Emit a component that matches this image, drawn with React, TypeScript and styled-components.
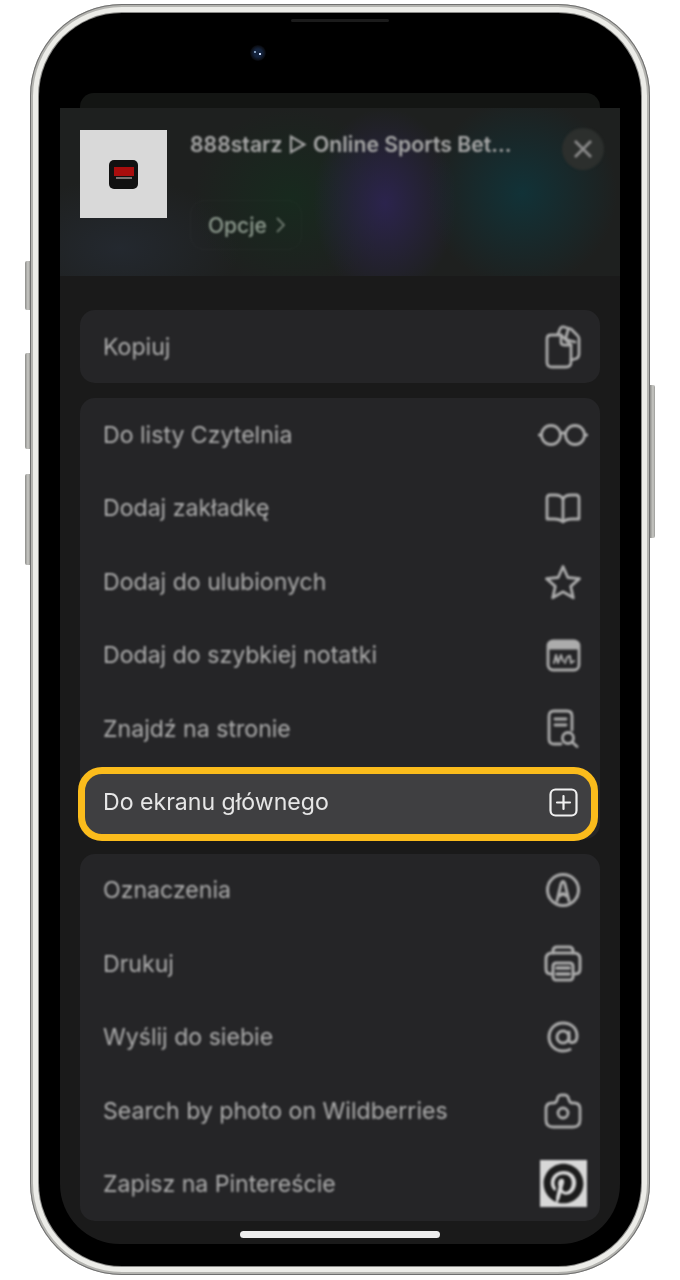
import styled, { createGlobalStyle } from 'styled-components';
import { FaPinterest } from 'react-icons/fa';

const GlobalStyle = createGlobalStyle`
  html, body {
    margin: 0;
    padding: 0;
    background: #fff;
  }
  * {
    box-sizing: border-box;
  }
`;

const Page = styled.div`
  position: relative;
  width: 680px;
  height: 1280px;
  padding: 4px 30px;
  overflow: hidden;
  background: #fff;
  font-family: Inter, "Liberation Sans", sans-serif;
`;

const SideButton = styled.div<{ $right?: boolean; $top: number; $height: number }>`
  position: absolute;
  top: ${(p) => p.$top}px;
  left: ${(p) => (p.$right ? 650 : 25)}px;
  width: 5px;
  height: ${(p) => p.$height}px;
  border-radius: ${(p) => (p.$right ? '0 2px 2px 0' : '2px 0 0 2px')};
  background: linear-gradient(90deg, #8d8d8a, #c9c9c5 60%, #9a9a97);
`;

const Bezel = styled.div`
  height: 1271px;
  padding: 9px;
  border-radius: 92px;
  background: #ecece8;
  box-shadow: inset 0 0 0 1px #6f6f6f, inset 0 0 0 3px #b4b4b0;
`;

const Phone = styled.div`
  display: flex;
  flex-direction: column;
  height: 100%;
  padding: 0 21px;
  border-radius: 83px;
  background: #000;
  box-shadow: 0 0 0 1px #8a8a88;
`;

const TopBar = styled.div`
  display: flex;
  flex-direction: column;
  align-items: center;
  height: 80px;
  padding-top: 6px;
`;

const Speaker = styled.div`
  width: 98px;
  height: 3px;
  border-radius: 2px;
  background: #1b1b1b;
`;

const Lens = styled.div`
  width: 16px;
  height: 16px;
  margin: 23px 0 0 -164px;
  border-radius: 50%;
  background:
    radial-gradient(circle 1.5px at 10px 9px, #cfe0ff 0 100%, transparent),
    radial-gradient(circle 1.5px at 5px 7px, #7f98b8 0 100%, transparent),
    radial-gradient(circle at 50% 50%, #14233d 0 4px, #0c0f16 7px, #05060a 8px);
`;

const BackCard = styled.div`
  height: 15px;
  margin: 0 20px;
  border-radius: 14px 14px 0 0;
  background: #131513;
`;

const Sheet = styled.div`
  display: flex;
  flex-direction: column;
  height: 1136px;
  overflow: hidden;
  border-radius: 0 0 60px 60px;
  background: #1a1a1a;
`;

const Header = styled.div`
  display: flex;
  flex: 0 0 168px;
  align-items: flex-start;
  padding: 22px 16px 0 20px;
  background:
    radial-gradient(ellipse 95px 95px at 462px 85px, rgba(16, 52, 58, 0.9) 0%, rgba(16, 52, 58, 0) 100%),
    radial-gradient(ellipse 72px 95px at 325px 95px, rgba(45, 36, 82, 0.9) 0%, rgba(45, 36, 82, 0) 100%),
    radial-gradient(ellipse 100px 90px at 232px 90px, rgba(22, 44, 30, 0.8) 0%, rgba(22, 44, 30, 0) 100%),
    radial-gradient(ellipse 120px 70px at 60px 140px, rgba(38, 44, 54, 0.7) 0%, rgba(38, 44, 54, 0) 100%),
    #1e201f;
`;

const AppTile = styled.div`
  display: flex;
  flex: 0 0 87px;
  align-items: center;
  justify-content: center;
  height: 88px;
  background: #d9d9d9;
  filter: blur(0.7px);
`;

const AppLogo = styled.div`
  display: flex;
  flex-direction: column;
  align-items: center;
  gap: 1px;
  width: 29px;
  height: 29px;
  padding-top: 7px;
  border-radius: 5px;
  background: #111;
  filter: blur(0.5px);

  &::before {
    content: '';
    width: 20px;
    height: 9px;
    background: #a80d0d;
  }

  &::after {
    content: '';
    width: 16px;
    height: 2px;
    background: #77706f;
  }
`;

const HeaderInfo = styled.div`
  display: flex;
  flex: 1;
  flex-direction: column;
  align-items: flex-start;
  min-width: 0;
  padding-left: 23px;
`;

const PageTitle = styled.div`
  color: #a8a8a8;
  font-size: 21.2px;
  font-weight: 600;
  line-height: 28px;
  white-space: nowrap;
  filter: blur(1px);
`;

const OptionsButton = styled.div`
  display: flex;
  align-items: center;
  gap: 9px;
  width: 112px;
  height: 50px;
  margin-top: 42px;
  padding-left: 17px;
  border: 1px solid rgba(255, 255, 255, 0.04);
  border-radius: 14px;
  color: #8f9c90;
  font-size: 21px;
  font-weight: 500;
  filter: blur(1px);
`;

const CloseButton = styled.div`
  display: flex;
  flex: 0 0 42px;
  align-items: center;
  justify-content: center;
  height: 42px;
  margin-top: -2px;
  border-radius: 50%;
  background: #2c2f2d;
  color: #8a8a8a;
  filter: blur(0.8px);
`;

const Body = styled.div`
  display: flex;
  flex-direction: column;
  gap: 15px;
  padding: 34px 20px 0;
`;

const Group = styled.div`
  border-radius: 15px;
  background: #252527;
`;

const Row = styled.div<{ $active?: boolean }>`
  position: relative;
  display: flex;
  align-items: center;
  justify-content: space-between;
  height: 73.4px;
  padding: 0 12px 0 23px;
  color: ${(p) => (p.$active ? '#e6e6e6' : '#aeaeae')};
  font-size: 23.1px;
  font-weight: 400;

  &::before {
    content: ${(p) => (p.$active ? "''" : 'none')};
    position: absolute;
    top: 2px;
    right: 2px;
    bottom: -2px;
    left: -2px;
    border: 7px solid #fbbc1c;
    border-radius: 24px;
    background: #3f3f41;
  }
`;

const Label = styled.span<{ $active?: boolean }>`
  position: relative;
  white-space: nowrap;
  filter: blur(${(p) => (p.$active ? 0.5 : 1)}px);
`;

const IconBox = styled.div<{ $active?: boolean }>`
  position: relative;
  display: flex;
  flex: 0 0 50px;
  align-items: center;
  justify-content: center;
  height: 50px;
  color: ${(p) => (p.$active ? '#f0f0f0' : '#acacac')};
  filter: blur(${(p) => (p.$active ? 0.4 : 0.9)}px);
`;

const PinterestTile = styled.div`
  display: flex;
  align-items: center;
  justify-content: center;
  width: 47px;
  height: 47px;
  background: #d8d8d8;
  color: #1c1c1c;
`;

const HomeIndicator = styled.div`
  flex: 0 0 7px;
  width: 200px;
  margin: 10px auto 0;
  border-radius: 4px;
  background: #ececec;
  filter: blur(0.4px);
`;

type GlyphProps = { w: number; h: number; sw?: number; children: React.ReactNode };

const Glyph = ({ w, h, sw = 2.8, children }: GlyphProps) => (
  <svg
    width={w}
    height={h}
    viewBox={`0 0 ${w} ${h}`}
    fill="none"
    stroke="currentColor"
    strokeWidth={sw}
    strokeLinecap="round"
    strokeLinejoin="round"
  >
    {children}
  </svg>
);

const icons = {
  copy: (
    <Glyph w={36} h={44}>
      <path d="M13 9 L15 4 Q16 1.500 19 2 L26 4 L32 10 Q34.500 12 34 15 V29 Q34 33 30 34 L26 35" />
      <path d="M23 5 L21 12 Q20.500 14 23 15 L30 17" />
      <path d="M6 10 H16 L26 20 V37 Q26 42 21 42 H7 Q2 42 2 37 V14 Q2 10 6 10 Z" />
      <path d="M16 10 V17 Q16 20 19 20 H26" />
    </Glyph>
  ),
  glasses: (
    <Glyph w={50} h={24}>
      <circle cx="13" cy="12" r="9.500" />
      <circle cx="37" cy="12" r="9.500" />
      <path d="M22.500 11 Q25 8.500 27.500 11 M3 12 H1 M47 12 H49" />
    </Glyph>
  ),
  book: (
    <Glyph w={38} h={31}>
      <path d="M19 6 Q17 2 11 2 H6 Q3 2 3 5 V26 H10 Q16 26 19 29 Q22 26 28 26 H35 V5 Q35 2 32 2 H27 Q21 2 19 6 Z" />
      <path d="M19 6 V28" />
    </Glyph>
  ),
  star: (
    <Glyph w={38} h={36}>
      <path d="M19 2.500 L23.800 13.500 L35.500 14.600 L26.700 22.400 L29.300 33.800 L19 27.800 L8.700 33.800 L11.300 22.400 L2.500 14.600 L14.200 13.500 Z" />
    </Glyph>
  ),
  note: (
    <Glyph w={35} h={33}>
      <rect x="2" y="2" width="31" height="29" rx="5" />
      <path d="M3 4 H32 V9 H3 Z" fill="currentColor" />
      <path d="M8 24 L10 16 L12 24 L15 16 L17 22 M19 24 Q21 16 24 17 L25 24 L28 22" strokeWidth="2" />
    </Glyph>
  ),
  find: (
    <Glyph w={32} h={39}>
      <path d="M14 35 H7 Q2 35 2 30 V7 Q2 2 7 2 H20 Q25 2 25 7 V21" />
      <path d="M8 10 H19 M8 16 H19" />
      <circle cx="21" cy="29" r="5.500" />
      <path d="M25 33 L30 37.500" />
    </Glyph>
  ),
  plus: (
    <Glyph w={29} h={29} sw={2.2}>
      <rect x="1.500" y="1.500" width="26" height="26" rx="5" />
      <path d="M14.500 8 V21 M8 14.500 H21" />
    </Glyph>
  ),
  markup: (
    <Glyph w={36} h={36} sw={3}>
      <circle cx="18" cy="18" r="15.500" />
      <path d="M12 29 L16 12 Q18 7 20 12 L24 29" />
      <path d="M15 24 Q18 19 21 24" fill="currentColor" />
    </Glyph>
  ),
  printer: (
    <Glyph w={38} h={37} sw={3}>
      <path d="M9 8 V6 Q9 2 13 2 H25 Q29 2 29 6 V8" />
      <path d="M8 29 H7 Q2 29 2 24 V14 Q2 8 8 8 H30 Q36 8 36 14 V24 Q36 29 31 29 H30" />
      <rect x="9" y="18" width="20" height="17" rx="3" />
      <path d="M13 23 H25 M13 29 H25" strokeWidth="3.500" />
    </Glyph>
  ),
  at: (
    <Glyph w={32} h={32} sw={3}>
      <circle cx="16" cy="16" r="6" />
      <path d="M22 11 V18 Q22 22 25.500 21.500 Q30 21 30 15 C30 7 24 2 16 2 C8 2 2 8 2 16 C2 24 8 30 16 30 Q20 30 23 28.500" />
    </Glyph>
  ),
  camera: (
    <Glyph w={38} h={36}>
      <path d="M8 10 H10 Q12 10 13 7 L14 4 Q15 2 17 2 H21 Q23 2 24 4 L25 7 Q26 10 28 10 H30 Q36 10 36 16 V27 Q36 34 29 34 H9 Q2 34 2 27 V16 Q2 10 8 10 Z" />
      <circle cx="19" cy="20" r="5" />
    </Glyph>
  ),
};

type Item = { label: string; icon?: React.ReactNode; active?: boolean };

const groups: Item[][] = [
  [{ label: 'Kopiuj', icon: icons.copy }],
  [
    { label: 'Do listy Czytelnia', icon: icons.glasses },
    { label: 'Dodaj zakładkę', icon: icons.book },
    { label: 'Dodaj do ulubionych', icon: icons.star },
    { label: 'Dodaj do szybkiej notatki', icon: icons.note },
    { label: 'Znajdź na stronie', icon: icons.find },
    { label: 'Do ekranu głównego', icon: icons.plus, active: true },
  ],
  [
    { label: 'Oznaczenia', icon: icons.markup },
    { label: 'Drukuj', icon: icons.printer },
    { label: 'Wyślij do siebie', icon: icons.at },
    { label: 'Search by photo on Wildberries', icon: icons.camera },
    {
      label: 'Zapisz na Pintereście',
      icon: (
        <PinterestTile>
          <FaPinterest size={41} />
        </PinterestTile>
      ),
    },
  ],
];

const App = () => {
  return (
    <Page>
      <GlobalStyle />
      <SideButton $top={261} $height={49} />
      <SideButton $top={353} $height={96} />
      <SideButton $top={474} $height={91} />
      <SideButton $right $top={385} $height={153} />
      <Bezel>
        <Phone>
          <TopBar>
            <Speaker />
            <Lens />
          </TopBar>
          <BackCard />
          <Sheet>
            <Header>
              <AppTile>
                <AppLogo />
              </AppTile>
              <HeaderInfo>
                <PageTitle>888starz ▷ Online Sports Bet...</PageTitle>
                <OptionsButton>
                  Opcje
                  <svg width="9" height="16" viewBox="0 0 9 16" fill="none" stroke="#6f7a70" strokeWidth="1.800">
                    <path d="M1 1 L8 8 L1 15" />
                  </svg>
                </OptionsButton>
              </HeaderInfo>
              <CloseButton>
                <svg width="20" height="20" viewBox="0 0 20 20" fill="none" stroke="currentColor" strokeWidth="2.800">
                  <path d="M2 2 L18 18 M18 2 L2 18" />
                </svg>
              </CloseButton>
            </Header>
            <Body>
              {groups.map((items, i) => (
                <Group key={i}>
                  {items.map((item) => (
                    <Row key={item.label} $active={item.active}>
                      <Label $active={item.active}>{item.label}</Label>
                      <IconBox $active={item.active}>{item.icon}</IconBox>
                    </Row>
                  ))}
                </Group>
              ))}
            </Body>
            <HomeIndicator />
          </Sheet>
        </Phone>
      </Bezel>
    </Page>
  );
};

export default App;
